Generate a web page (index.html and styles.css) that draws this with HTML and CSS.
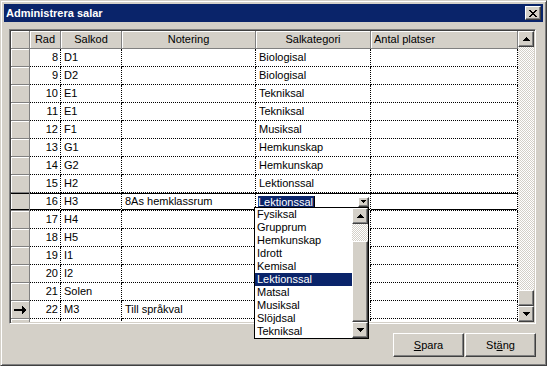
FILE: index.html
```html
<!DOCTYPE html>
<html>
<head>
<meta charset="utf-8">
<link rel="stylesheet" href="styles.css">
</head>
<body>
<div class="window">
  <div class="titlebar">
    <span class="title">Administrera salar</span>
    <button class="raised close" aria-label="Stäng"><svg width="8" height="7" viewBox="0 0 8 7" shape-rendering="crispEdges"><path d="M0 0h2v1h-2z M6 0h2v1h-2z M1 1h2v1h-2z M5 1h2v1h-2z M2 2h4v1h-4z M3 3h2v1h-2z M2 4h4v1h-4z M1 5h2v1h-2z M5 5h2v1h-2z M0 6h2v1h-2z M6 6h2v1h-2z" fill="#000"/></svg></button>
  </div>
  <div class="client">
    <div class="grid">
      <div class="table">
        <div class="row head">
          <div class="cell sel"></div>
          <div class="cell">Rad</div>
          <div class="cell">Salkod</div>
          <div class="cell">Notering</div>
          <div class="cell">Salkategori</div>
          <div class="cell left">Antal platser</div>
        </div>
        <div class="row"><div class="cell sel"></div><div class="cell num">8</div><div class="cell">D1</div><div class="cell"></div><div class="cell">Biologisal</div><div class="cell"></div></div>
        <div class="row"><div class="cell sel"></div><div class="cell num">9</div><div class="cell">D2</div><div class="cell"></div><div class="cell">Biologisal</div><div class="cell"></div></div>
        <div class="row"><div class="cell sel"></div><div class="cell num">10</div><div class="cell">E1</div><div class="cell"></div><div class="cell">Tekniksal</div><div class="cell"></div></div>
        <div class="row"><div class="cell sel"></div><div class="cell num">11</div><div class="cell">E1</div><div class="cell"></div><div class="cell">Tekniksal</div><div class="cell"></div></div>
        <div class="row"><div class="cell sel"></div><div class="cell num">12</div><div class="cell">F1</div><div class="cell"></div><div class="cell">Musiksal</div><div class="cell"></div></div>
        <div class="row"><div class="cell sel"></div><div class="cell num">13</div><div class="cell">G1</div><div class="cell"></div><div class="cell">Hemkunskap</div><div class="cell"></div></div>
        <div class="row"><div class="cell sel"></div><div class="cell num">14</div><div class="cell">G2</div><div class="cell"></div><div class="cell">Hemkunskap</div><div class="cell"></div></div>
        <div class="row"><div class="cell sel"></div><div class="cell num">15</div><div class="cell">H2</div><div class="cell"></div><div class="cell">Lektionssal</div><div class="cell"></div></div>
        <div class="row current"><div class="cell sel"></div><div class="cell num">16</div><div class="cell">H3</div><div class="cell">8As hemklassrum</div><div class="cell combo"><span class="edit"><span class="hl">Lektionssal</span><span class="caret"></span></span><span class="raised cbtn"><svg width="5" height="3" viewBox="0 0 5 3" shape-rendering="crispEdges"><path d="M0 0h5v1h-5z M1 1h3v1h-3z M2 2h1v1h-1z" fill="#000"/></svg></span></div><div class="cell"></div></div>
        <div class="row"><div class="cell sel"></div><div class="cell num">17</div><div class="cell">H4</div><div class="cell"></div><div class="cell"></div><div class="cell"></div></div>
        <div class="row"><div class="cell sel"></div><div class="cell num">18</div><div class="cell">H5</div><div class="cell"></div><div class="cell"></div><div class="cell"></div></div>
        <div class="row"><div class="cell sel"></div><div class="cell num">19</div><div class="cell">I1</div><div class="cell"></div><div class="cell"></div><div class="cell"></div></div>
        <div class="row"><div class="cell sel"></div><div class="cell num">20</div><div class="cell">I2</div><div class="cell"></div><div class="cell"></div><div class="cell"></div></div>
        <div class="row"><div class="cell sel"></div><div class="cell num">21</div><div class="cell">Solen</div><div class="cell"></div><div class="cell"></div><div class="cell"></div></div>
        <div class="row"><div class="cell sel"><svg width="12" height="8" viewBox="0 0 12 8" shape-rendering="crispEdges"><path d="M0 3h8v2h-8z M8 0h1v8h-1z M9 1h1v6h-1z M10 2h1v4h-1z M11 3h1v2h-1z" fill="#000"/></svg></div><div class="cell num">22</div><div class="cell">M3</div><div class="cell">Till språkval</div><div class="cell"></div><div class="cell"></div></div>
        <div class="row"><div class="cell sel"></div><div class="cell num"></div><div class="cell"></div><div class="cell"></div><div class="cell"></div><div class="cell"></div></div>
      </div>
      <div class="vscroll">
        <div class="raised sbtn"><svg width="7" height="4" viewBox="0 0 7 4" shape-rendering="crispEdges"><path d="M3 0h1v1h-1z M2 1h3v1h-3z M1 2h5v1h-5z M0 3h7v1h-7z" fill="#000"/></svg></div>
        <div class="track"></div>
        <div class="raised thumb"></div>
        <div class="raised sbtn"><svg width="7" height="4" viewBox="0 0 7 4" shape-rendering="crispEdges"><path d="M0 0h7v1h-7z M1 1h5v1h-5z M2 2h3v1h-3z M3 3h1v1h-1z" fill="#000"/></svg></div>
      </div>
      <div class="dropdown">
        <div class="items">
          <div class="item">Fysiksal</div>
          <div class="item">Grupprum</div>
          <div class="item">Hemkunskap</div>
          <div class="item">Idrott</div>
          <div class="item">Kemisal</div>
          <div class="item on">Lektionssal</div>
          <div class="item">Matsal</div>
          <div class="item">Musiksal</div>
          <div class="item">Slöjdsal</div>
          <div class="item">Tekniksal</div>
        </div>
        <div class="lscroll">
          <div class="raised sbtn"><svg width="7" height="4" viewBox="0 0 7 4" shape-rendering="crispEdges"><path d="M3 0h1v1h-1z M2 1h3v1h-3z M1 2h5v1h-5z M0 3h7v1h-7z" fill="#000"/></svg></div>
          <div class="track ltrack"></div>
          <div class="raised lthumb"></div>
          <div class="raised sbtn"><svg width="7" height="4" viewBox="0 0 7 4" shape-rendering="crispEdges"><path d="M0 0h7v1h-7z M1 1h5v1h-5z M2 2h3v1h-3z M3 3h1v1h-1z" fill="#000"/></svg></div>
        </div>
      </div>
    </div>
    <div class="footer">
      <button class="raised btn"><u>S</u>para</button>
      <button class="raised btn">St<u>ä</u>ng</button>
    </div>
  </div>
</div>
</body>
</html>
```
FILE: styles.css
```css
* { box-sizing: border-box; }
body {
  margin: 0;
  background: #d4d0c8;
  font-family: "Liberation Sans", Arial, sans-serif;
  font-size: 11px;
  color: #000;
}
.window {
  width: 547px;
  height: 366px;
  border: 1px solid;
  border-color: #d4d0c8 #404040 #404040 #d4d0c8;
  box-shadow: inset 1px 1px #fff, inset -1px -1px #808080;
  padding: 3px;
  display: flex;
  flex-direction: column;
  background: #d4d0c8;
}
.titlebar {
  height: 18px;
  flex: none;
  background: #0a246a;
  display: flex;
  align-items: center;
  justify-content: space-between;
  padding: 0 2px;
}
.title {
  color: #fff;
  font-weight: bold;
  font-size: 11px;
}
.raised {
  background: #d4d0c8;
  border: 1px solid;
  border-color: #fff #404040 #404040 #fff;
  box-shadow: inset -1px -1px #808080;
  display: flex;
  align-items: center;
  justify-content: center;
  padding: 0;
}
.close {
  width: 16px;
  height: 14px;
}
.client {
  flex: 1;
  display: flex;
  flex-direction: column;
  padding: 7px 7px 0 5px;
}
.grid {
  position: relative;
  width: 527px;
  height: 295px;
  flex: none;
  border: 1px solid;
  border-color: #808080 #fff #fff #808080;
  box-shadow: inset 1px 1px #404040, inset -1px -1px #d4d0c8;
  padding: 1px;
  display: flex;
}
.table {
  width: 507px;
  height: 291px;
  overflow: hidden;
  background: #fff;
}
.row {
  display: grid;
  grid-template-columns: 19px 31px 61px 134px 115px 147px;
  height: 18px;
}
.cell {
  background: #fff;
  border-right: 1px dotted #000;
  border-bottom: 1px dotted #000;
  padding: 0 3px;
  line-height: 17px;
  white-space: nowrap;
  overflow: hidden;
}
.num {
  text-align: right;
  padding-right: 2px;
}
.sel {
  background: #d4d0c8;
  border-right: 1px solid #808080;
  border-bottom: 1px solid #808080;
  box-shadow: inset 1px 1px #fff;
  padding: 0;
  display: flex;
  align-items: center;
  justify-content: center;
}
.head .cell {
  background: #d4d0c8;
  border-right: 1px solid #808080;
  border-bottom: 1px solid #808080;
  box-shadow: inset 1px 1px #fff;
  text-align: center;
}
.head .left {
  text-align: left;
}
.current .cell {
  box-shadow: inset 0 1px #000, inset 0 -1px #000;
}
.current .sel {
  box-shadow: inset 0 1px #000, inset 0 -1px #000, inset 1px 0 #fff;
}
.combo {
  display: flex;
  align-items: center;
  justify-content: space-between;
  padding: 0 1px 0 2px;
}
.edit {
  display: flex;
  align-items: center;
}
.hl {
  background: #0a246a;
  color: #fff;
  line-height: 12px;
  padding: 0 1px 0 0;
}
.caret {
  width: 1px;
  height: 12px;
  background: #000;
}
.cbtn {
  width: 11px;
  height: 10px;
}
.vscroll {
  width: 16px;
  display: flex;
  flex-direction: column;
}
.sbtn {
  height: 16px;
  flex: none;
}
.track {
  flex: 1;
  background-color: #fff;
  background-image: conic-gradient(#d4d0c8 25%, #fff 0 50%, #d4d0c8 0 75%, #fff 0);
  background-size: 2px 2px;
}
.thumb {
  height: 16px;
  flex: none;
}
.dropdown {
  position: absolute;
  left: 244px;
  top: 177px;
  width: 115px;
  height: 132px;
  border: 1px solid #000;
  background: #fff;
  display: flex;
}
.items {
  flex: 1;
}
.item {
  height: 13px;
  line-height: 13px;
  padding-left: 2px;
  white-space: nowrap;
}
.item.on {
  background: #0a246a;
  color: #fff;
}
.lscroll {
  width: 16px;
  display: flex;
  flex-direction: column;
}
.ltrack {
  flex: none;
  height: 17px;
}
.lthumb {
  height: 81px;
  flex: none;
}
.footer {
  display: flex;
  justify-content: flex-end;
  gap: 1px;
  margin-top: 9px;
}
.btn {
  width: 71px;
  height: 24px;
  font: inherit;
  color: #000;
}
```
